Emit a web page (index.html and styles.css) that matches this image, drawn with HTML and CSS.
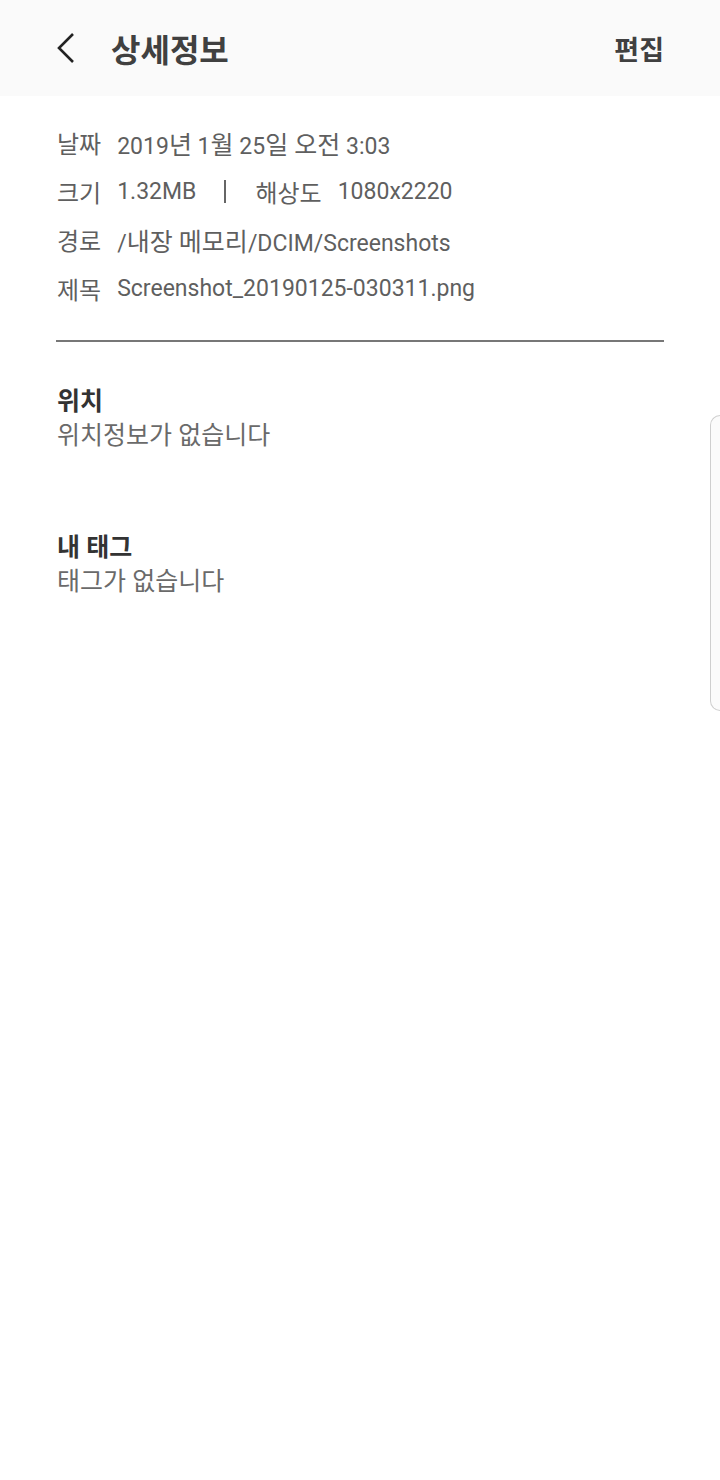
FILE: index.html
```html
<!DOCTYPE html>
<html lang="ko">
<head>
<meta charset="UTF-8">
<title>상세정보</title>
<link rel="stylesheet" href="styles.css">
</head>
<body>

<div class="header">
  <svg class="back" width="22" height="32" viewBox="0 0 22 32">
    <path d="M18 2 L4 16 L18 30" fill="none" stroke="#222" stroke-width="2.6"/>
  </svg>
  <div class="title">상세정보</div>
  <div class="edit">편집</div>
</div>

<div class="content">
  <div class="row"><span class="label">날짜</span><span>2019<span class="ko">년</span> 1<span class="ko">월</span> 25<span class="ko">일 오전</span> 3:03</span></div>
  <div class="row"><span class="label">크기</span><span>1.32MB</span><span class="bar"></span><span class="label">해상도</span><span>1080x2220</span></div>
  <div class="row"><span class="label">경로</span><span>/<span class="ko">내장 메모리</span>/DCIM/Screenshots</span></div>
  <div class="row"><span class="label">제목</span><span>Screenshot_20190125-030311.png</span></div>

  <hr class="line">

  <div class="section">
    <div class="sec-title">위치</div>
    <div class="sec-text">위치정보가 없습니다</div>
  </div>
  <div class="section tags">
    <div class="sec-title">내 태그</div>
    <div class="sec-text">태그가 없습니다</div>
  </div>
</div>

<div class="handle"></div>

</body>
</html>
```

FILE: styles.css
```css
body { margin: 0; font-family: Roboto, "Noto Sans CJK KR", sans-serif; background: #fff; color: #5f5f5f; }
.header { height: 96px; background: #fafafa; display: flex; align-items: center; padding: 0 56px 0 55px; }
.back { margin-right: 34px; }
.title { font-size: 32px; font-weight: 700; color: #404040; flex: 1; }
.edit { font-size: 27px; font-weight: 700; color: #404040; }
.content { padding: 23px 56px 0 57px; }
.row { display: flex; align-items: center; height: 47.5px; font-size: 23px; }
.row + .row { padding-top: 1px; }
.label { font-size: 24px; margin-right: 16px; }
.ko { font-size: 25px; }
.bar { width: 2px; height: 23px; background: #666; margin: 0 29px 0 28px; }
.line { border: none; height: 2px; background: #777; margin: 28px 0 0 -1px; }
.section { margin-top: 43px; }
.section.tags { margin-top: 78px; }
.sec-title { font-size: 25px; line-height: 34px; font-weight: 700; color: #333; }
.sec-text { font-size: 25px; line-height: 34px; color: #6a6a6a; }
.handle { position: absolute; right: 0; top: 415px; width: 9px; height: 294px; border: 1px solid #cfcfcf; border-right: none; border-radius: 12px 0 0 12px; background: #fbfbfb; }
```
